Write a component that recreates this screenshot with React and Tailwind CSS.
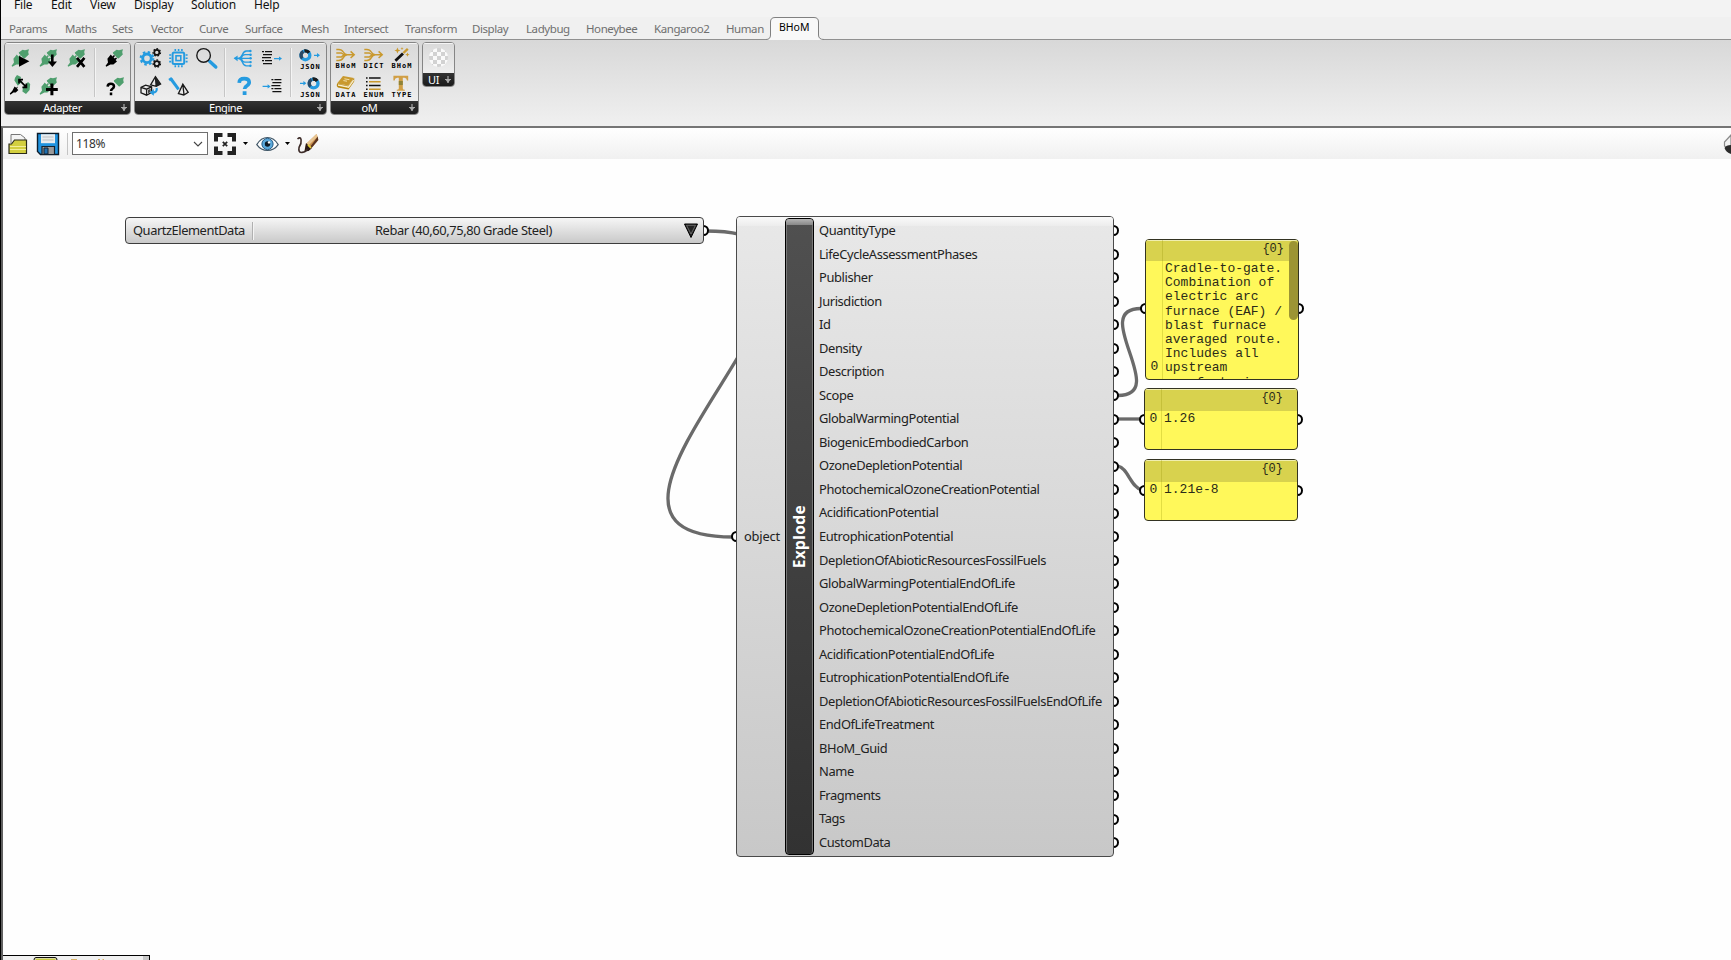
import React from "react";

const GREEN = "#4f9f6e";
const BLUE = "#259be0";
const GOLD = "#c9992e";

function Cell({ children }) {
  return (
    <svg className="block h-7 w-7 shrink-0" viewBox="0 0 28 28" fill="none">
      {children}
    </svg>
  );
}

function Tiny({ x = 3.4, y = 24.3, w = 20, children }) {
  return (
    <text x={x} y={y} textLength={w} fontSize="7" fontWeight="700" fontFamily="DejaVu Sans Mono, monospace" fill="#000">
      {children}
    </text>
  );
}

const UPPER = "M23 5.2 L22.2 8 L22.8 10.5 L18.6 14.6 L17.6 14.2 L13 9.6 L12.8 8.4 L16.6 5.8 L19 6.2 Z";
const LOWER = "M10.8 10.6 L12.4 12.4 L14 11 L15 12 L13.6 13.6 L14.6 14.6 L16.2 13.4 L17 14.4 L15.6 16 L17 17.4 L13.4 20.6 L10.4 20.4 L6.2 22.8 L5.6 21.8 L8 18.6 L7.4 14.8 Z";

function Plug({ upper = GREEN, lower = GREEN }) {
  return (
    <g>
      <path d={UPPER} fill={upper} />
      <path d={LOWER} fill={lower} />
    </g>
  );
}

function Gear({ x, y, r, c, teeth }) {
  const step = (2 * Math.PI * r) / teeth;
  return (
    <g stroke={c}>
      <circle cx={x} cy={y} r={r * 0.68} strokeWidth={r * 0.46} />
      <circle cx={x} cy={y} r={r} strokeWidth={r * 0.34} strokeDasharray={`${step * 0.5} ${step * 0.5}`} />
    </g>
  );
}

function Lines({ x, w = 11 }) {
  return (
    <g stroke="#111" strokeWidth="1.2">
      {[7.6, 10.6, 13.6, 16.6, 19.6].map((y, i) => (
        <path key={y} d={i === 0 || i === 3 ? `M${x} ${y}h2m1 0h${w - 4}` : `M${x + (i === 2 ? 0 : 1)} ${y}h${w - 2}`} />
      ))}
    </g>
  );
}

function Arrow({ x, y, w = 7 }) {
  return (
    <g>
      <path d={`M${x} ${y}h${w - 2}`} stroke={BLUE} strokeWidth="1.2" />
      <path d={`M${x + w - 3} ${y - 2.2}l3 2.2l-3 2.2z`} fill={BLUE} />
    </g>
  );
}

function Ring({ x, y }) {
  return (
    <g strokeWidth="3.4">
      <circle cx={x} cy={y} r="4.4" stroke={BLUE} />
      <path d={`M${x - 3.1} ${y + 3.1}A4.4 4.4 0 0 1 ${x - 2} ${y - 3.9}`} stroke="#2b4a66" />
      <path d={`M${x - 1} ${y - 4.3}A4.4 4.4 0 0 1 ${x + 3.6} ${y - 2.5}`} stroke="#1c1c1c" />
    </g>
  );
}

function Fan() {
  return (
    <g stroke={GOLD} strokeWidth="1.5">
      <path d="M4.3 5.4h2.5q3 0 4.5 2.6t4 2.7M4.3 9h5q2 1.7 5 1.7M4.3 12.9h5q2-2.2 5-2.2M4.3 16.4h2.5q3 0 4.5-2.8t4-2.9h6M18.6 7.4l3.6 3.3l-3.6 3.3" />
    </g>
  );
}

const ADAPTER = [
  [
    <Cell key="a"><Plug /><path d="M13 12l10.4 5.3L13 22.8z" fill="#000" /></Cell>,
    <Cell key="b"><Plug /><path d="M18.3 10.5v8" stroke="#000" strokeWidth="2.6" /><path d="M13.8 17.4h9.2l-4.6 5.6z" fill="#000" /></Cell>,
    <Cell key="c"><Plug /><path d="M15 13.8l7.4 9M22.4 13.8l-7.4 9" stroke="#000" strokeWidth="2.7" /></Cell>,
  ],
  [
    <Cell key="d">
      <path d="M11 3l4 2-.6 2.6 1.8 2-4.4 4.2-3.4-5.4.6-2.6zM17 15l5-5 2.2 2-.6 6-3.6 4-3.6-2.6z" fill={GREEN} />
      <path d="M13.6 8.4l6 6M13 11.6V7.6h4M20.4 11.6v3.8h-4" stroke="#000" strokeWidth="1.7" />
      <path d="M8.6 14.4l1.6 1.4 1.8-1.2-1 2.2 1.4 1.2-2.6 2.6-2.4-.2-3 2.4-.6-1.2 2.4-2.6z" fill="#000" />
    </Cell>,
    <Cell key="e"><Plug /><path d="M17.9 11.6v11.6M12 17.4h11.8" stroke="#000" strokeWidth="3" /></Cell>,
    <Cell key="f" />,
  ],
];

const ADAPTER_RIGHT = [
  [<Cell key="a"><Plug lower="#000" /></Cell>],
  [
    <Cell key="b">
      <path d={UPPER} fill={GREEN} transform="translate(1 0)" />
      <path d="M7.600 14.600q.2-2.800 3.200-2.800t3.200 2.500q0 1.500-1.600 2.500-1.400.8-1.400 2.200M11 20.600v2.600" stroke="#000" strokeWidth="2.500" />
    </Cell>,
  ],
];

const ENGINE_A = [
  [
    <Cell key="a">
      <Gear x={11} y={14.3} r={6.3} c={BLUE} teeth={8} />
      <Gear x={20.8} y={8.4} r={3.7} c="#111" teeth={7} />
      <Gear x={20.8} y={19.6} r={3.7} c="#111" teeth={7} />
    </Cell>,
    <Cell key="b">
      <rect x="8.600" y="8.400" width="11.600" height="11.600" rx="1.500" stroke={BLUE} strokeWidth="2" />
      <rect x="12" y="11.800" width="4.800" height="4.800" stroke={BLUE} strokeWidth="1.600" />
      <path d="M10.500 6h8.400M10.500 22.300h8.400M6.200 10.200v8.200M22.600 10.200v8.200" stroke={BLUE} strokeWidth="2" strokeDasharray="1.6 1.7" />
    </Cell>,
    <Cell key="c">
      <path d="M16.200 16.400l2.400 2.200" stroke="#222" strokeWidth="1.400" />
      <path d="M17.800 17.400l6 5.600" stroke={BLUE} strokeWidth="3.400" strokeLinecap="round" />
      <circle cx="11.600" cy="11.400" r="6.800" stroke="#1a1a1a" strokeWidth="1.400" />
    </Cell>,
  ],
  [
    <Cell key="d">
      <path d="M5 15.400l4.600-2.200 6 1.600v5.600l-5 2.800-5.600-2.400zM5 15.400l5.600 1.800 5-2.400M10.600 17.200v6" stroke="#1a1a1a" strokeWidth="1.300" />
      <path d="M12 18l2.600-1.300v3.300l-2.600 1.300z" fill="#444" />
      <path d="M19.400 4.600l5.200 7.400-4.400 2.400-5.600-1.600zM19.400 4.600l.8 9.800" stroke="#1a1a1a" strokeWidth="1.300" />
      <path d="M19.400 4.600l5.200 7.400-4.400 2.400z" fill="#222" />
      <path d="M20.600 16q1 4.400-4 4.600" stroke={BLUE} strokeWidth="2.200" />
      <path d="M17.800 17v6.800l-4.200-3.200z" fill={BLUE} />
    </Cell>,
    <Cell key="e">
      <path d="M7 7l7.600 10.400" stroke={BLUE} strokeWidth="3" />
      <path d="M5.800 6l1.600 2.200" stroke={BLUE} strokeWidth="3.600" />
      <path d="M18.800 12.200l-4.400 9.400 5.400 1.400 4.400-2.600zM18.800 12.200l1.200 10.400" stroke="#1a1a1a" strokeWidth="1.300" />
    </Cell>,
    <Cell key="f" />,
  ],
];

const ENGINE_B = [
  [
    <Cell key="a">
      <path d="M4.500 14.300h16M8 14.300q3-.3 4.400-3.700t4-3.600h4M8 14.300q3 .3 4.400 3.900t4 3.600h4M11 14.300q1.600-3.600 4-3.600h5.600M11 14.300q1.600 3.800 4 3.800h5.600" stroke={BLUE} strokeWidth="1.300" />
      <path d="M7.600 11.400v5.800l-4-2.900z" fill={BLUE} />
      <g fill={BLUE}><circle cx="20.400" cy="7" r="1.200" /><circle cx="20.600" cy="10.700" r="1.200" /><circle cx="20.600" cy="14.300" r="1.200" /><circle cx="20.600" cy="18.100" r="1.200" /><circle cx="20.400" cy="21.800" r="1.200" /></g>
    </Cell>,
    <Cell key="b"><Lines x={4} /><Arrow x={16} y={14.6} w={8} /></Cell>,
  ],
  [
    <Cell key="c">
      <path d="M9.200 10.800q.2-4.200 5-4.200t5 3.700q0 2-2.400 3.500-2.200 1.300-2.200 3.200" stroke={BLUE} strokeWidth="3.700" />
      <path d="M12.700 19.200h3.800v3.800h-3.800z" fill={BLUE} />
    </Cell>,
    <Cell key="d"><Lines x={13.4} /><Arrow x={4.6} y={14.4} w={8} /></Cell>,
  ],
];

const ENGINE_C = [
  [<Cell key="a"><Ring x={9.4} y={11.3} /><Arrow x={18} y={11.3} w={6} /><Tiny x={4.2} y={25} w={19.4}>JSON</Tiny></Cell>],
  [<Cell key="b"><Ring x={17.6} y={11.5} /><Arrow x={4} y={11.3} w={6.4} /><Tiny x={4.2} y={25} w={19.4}>JSON</Tiny></Cell>],
];

const OM = [
  [
    <Cell key="a"><Fan /><Tiny>BHoM</Tiny></Cell>,
    <Cell key="b"><Fan /><Tiny>DICT</Tiny></Cell>,
    <Cell key="c">
      <path d="M7.400 16.800l7.600-7.400" stroke="#111" strokeWidth="2.800" />
      <path d="M15.400 9l4.400-4.200" stroke={GOLD} strokeWidth="2.400" />
      <path d="M9.400 3.600l1 2.200 2.200.6-2.200.8-1 2.200-.9-2.200-2.100-.8 2.100-.6zM19.400 8.600l.7 1.500 1.500.6-1.500.5-.7 1.600-.6-1.600-1.500-.5 1.500-.6zM14 3l.5 1.200 1.200.4-1.200.4-.5 1.200-.5-1.200-1.200-.4 1.200-.4z" fill={GOLD} />
      <Tiny>BHoM</Tiny>
    </Cell>,
  ],
  [
    <Cell key="d">
      <path d="M11 4l11 2-5.600 7.600L5 11.400z" fill={GOLD} />
      <path d="M5 11.400q-1 2.800 1 4.200l10.600 2 5.600-8V6l-5.800 7.800z" fill="#b8860b" />
      <path d="M6 13l10.600 2.200 5-7" stroke="#f7ecc9" strokeWidth="1.400" />
      <path d="M12.400 6.800l5 .9M11.400 8.600l3.600.6" stroke="#f1dfa8" strokeWidth="1" />
      <Tiny y={24.8}>DATA</Tiny>
    </Cell>,
    <Cell key="e">
      <path d="M6 6h1.600M6 9.800h1.600M6 13.600h1.600M6 17.200h1.600M9 6h11.600M9 13.600h11.600" stroke="#111" strokeWidth="1.500" />
      <path d="M9 9.800h11.600M9 17.200h11.600" stroke={GOLD} strokeWidth="1.500" />
      <Tiny y={24.8}>ENUM</Tiny>
    </Cell>,
    <Cell key="f">
      <path d="M5.400 3.800h14.800v4.600h-1.200q-.3-2.600-2.600-2.600h-1.600v10.600q0 1.200 2 1.300v1H8.800v-1q2-.1 2-1.300V5.800H9.200q-2.300 0-2.600 2.600H5.400z" fill="#d19f45" />
      <path d="M10.800 9h4v4h-4z" fill="#8f8337" />
      <Tiny y={24.8}>TYPE</Tiny>
    </Cell>,
  ],
];

function Block({ rows }) {
  return (
    <div className="flex flex-col">
      {rows.map((r, i) => (
        <div key={i} className="flex">{r}</div>
      ))}
    </div>
  );
}

function Sep() {
  return (
    <div className="flex w-2.5 justify-center py-1">
      <div className="w-0.5 border-l border-r border-l-[#c6c6c6] border-r-[#f4f4f4]" />
    </div>
  );
}

function Group({ label, className, bodyClass, children }) {
  return (
    <div className={"flex shrink-0 flex-col overflow-hidden rounded-[4px] border border-[#858585] " + className}>
      <div className={"flex bg-linear-to-b from-[#d9d9d9] to-[#eeeeee] pt-px shadow-[inset_0_1px_0_#f5f5f5] " + bodyClass}>{children}</div>
      <div className="flex flex-1 items-center bg-linear-to-b from-[#333333] to-[#1c1c1c] pr-0.5 text-[11px] leading-none text-white">
        <span className="flex-1 text-center -tracking-[0.4px]">{label}</span>
        <svg className="block h-[9px] w-2" viewBox="0 0 8 9" fill="none">
          <path d="M4 1v7M1 4.500h6" stroke="#aaaaaa" strokeWidth="1.200" />
          <path d="M1.800 5h4.400L4 8z" fill="#aaaaaa" />
        </svg>
      </div>
    </div>
  );
}

const MENU = [
  ["File", "w-[37px]"],
  ["Edit", "w-[39px]"],
  ["View", "w-[44px]"],
  ["Display", "w-[57px]"],
  ["Solution", "w-[63px]"],
  ["Help", "w-[40px]"],
];

const TABS = [
  ["Params", "w-14"],
  ["Maths", "w-[47px]"],
  ["Sets", "w-[39px]"],
  ["Vector", "w-12"],
  ["Curve", "w-[46px]"],
  ["Surface", "w-14"],
  ["Mesh", "w-[43px]"],
  ["Intersect", "w-[61px]"],
  ["Transform", "w-[67px]"],
  ["Display", "w-[54px]"],
  ["Ladybug", "w-[60px]"],
  ["Honeybee", "w-[68px]"],
  ["Kangaroo2", "w-[72px]"],
  ["Human", "w-[43px]"],
];

const OUTPUTS = [
  "QuantityType", "LifeCycleAssessmentPhases", "Publisher", "Jurisdiction", "Id", "Density", "Description", "Scope",
  "GlobalWarmingPotential", "BiogenicEmbodiedCarbon", "OzoneDepletionPotential", "PhotochemicalOzoneCreationPotential",
  "AcidificationPotential", "EutrophicationPotential", "DepletionOfAbioticResourcesFossilFuels",
  "GlobalWarmingPotentialEndOfLife", "OzoneDepletionPotentialEndOfLife", "PhotochemicalOzoneCreationPotentialEndOfLife",
  "AcidificationPotentialEndOfLife", "EutrophicationPotentialEndOfLife", "DepletionOfAbioticResourcesFossilFuelsEndOfLife",
  "EndOfLifeTreatment", "BHoM_Guid", "Name", "Fragments", "Tags", "CustomData",
];

function Grip({ className }) {
  return <span className={"absolute block h-[11px] w-[11px] rounded-full border-2 border-black bg-white " + className} />;
}

function Panel({ className, headClass, index, indexClass, grip, children }) {
  return (
    <div className={"absolute " + className}>
      <Grip className={"-left-[5px] " + grip} />
      <Grip className={"-right-[5px] " + grip} />
      <div className="relative flex h-full flex-col overflow-hidden rounded-[4px] border border-[#333322] bg-[#fff85a] font-['Liberation_Mono',monospace] text-[13px] leading-[14.2px] text-[#2b2b18]">
        <div className={"flex shrink-0 items-start justify-end border-t border-[#f0eeb0] bg-[#d8d24e] pr-[14px] text-[12px] " + headClass}>
          <span className="pt-px">{"{0}"}</span>
        </div>
        <div className="flex min-h-0 flex-1">
          <div className={"flex w-4 shrink-0 justify-center pl-px " + indexClass}>{index}</div>
          {children}
        </div>
        <div className="absolute inset-y-0 left-4 w-px bg-[#8a8a00]/25" />
      </div>
    </div>
  );
}

function Toolbar() {
  return (
    <div className="flex h-[31px] shrink-0 items-center bg-linear-to-b from-white to-[#f0f0f0] pl-[5px]">
      <svg className="block h-6 w-5" viewBox="0 0 20 24" fill="none">
        <path d="M3 11V2.500h9.500L17 6v5" fill="#f4f4f4" stroke="#777" strokeWidth="1" />
        <path d="M1 21.500V12h2.500l3-4H18.500v13.500z" fill="#d3cf3f" stroke="#2b2b1a" strokeWidth="1.200" />
        <path d="M2 14.500h16M2 17.500h16" stroke="#f3ef9a" strokeWidth="1" />
      </svg>
      <svg className="ml-2 block h-6 w-6" viewBox="0 0 24 24" fill="none">
        <path d="M1.500 1.500h21v21H4.500l-3-3z" fill="#1f92de" stroke="#0d1c2b" strokeWidth="1.400" />
        <path d="M5 2.200h14v9H5z" fill="#e8ecef" />
        <path d="M6.500 5h11M6.500 8h11" stroke="#b9c0c6" strokeWidth="1.200" />
        <path d="M6 14.500h12.500v8H6z" fill="#9a9a9a" stroke="#16222e" strokeWidth="1.200" />
        <path d="M8 16h4v6H8z" fill="#1f6fae" stroke="#16222e" />
      </svg>
      <div className="ml-[7px] h-5.5 w-px bg-[#c4c4c4]" />
      <div className="ml-1 flex h-[23px] w-[136px] items-center justify-between border border-[#6f6f6f] bg-white pr-1 pl-[3px] text-[12px] text-[#333]">
        <span className="-tracking-[0.4px]">118%</span>
        <svg className="block h-2 w-2.5" viewBox="0 0 10 8" fill="none"><path d="M1 2l4 4 4-4" stroke="#444" strokeWidth="1.100" /></svg>
      </div>
      <svg className="ml-[5px] block h-6 w-6" viewBox="0 0 24 24" fill="none">
        <path d="M9.500 3H3v6.500M14.500 3H21v6.500M9.500 21H3v-6.500M14.500 21H21v-6.500" stroke="#222" strokeWidth="4" />
        <path d="M9.800 9.800l4.400 4.400M14.200 9.800l-4.400 4.400" stroke="#222" strokeWidth="1.700" />
      </svg>
      <svg className="ml-1.5 block h-[3px] w-[5px]" viewBox="0 0 5 3"><path d="M0 0h5L2.500 3z" fill="#000" /></svg>
      <svg className="ml-2 block h-4 w-[23px]" viewBox="0 0 23 16" fill="none">
        <path d="M.8 8.600Q5 1.500 11.500 1.500T22.200 8.600Q18 14.500 11.500 14.500T.8 8.600z" fill="#fff" stroke="#3f5566" strokeWidth="1.200" />
        <circle cx="11.500" cy="8" r="5.600" fill="#5ba9dc" stroke="#245b86" />
        <circle cx="11.500" cy="8" r="2.700" fill="#0d1a26" />
        <circle cx="13" cy="6.400" r="1.200" fill="#fff" />
      </svg>
      <svg className="ml-1.5 block h-[3px] w-[5px]" viewBox="0 0 5 3"><path d="M0 0h5L2.500 3z" fill="#000" /></svg>
      <svg className="ml-1.5 block h-6 w-6" viewBox="0 0 24 24" fill="none">
        <path d="M20.500 2l1.800 6-7.600 9-6 2.400L10 12z" fill="#c98f4e" />
        <path d="M20.500 2L10 12l1.600 2.200L21.800 4.500z" fill="#e8c592" />
        <path d="M10 11l5.600 5.600-3 2.400-4.200.6z" fill="#2a1a18" />
        <path d="M21.800 4.500l.5 3.500-7.600 9-1.200-1.200z" fill="#5a3420" />
        <path d="M12 12.800l3 3" stroke="#e3cf3a" strokeWidth="1.800" />
        <path d="M1.500 7q3-2.600 3.600.8t-2 7.400q-1.200 5.600 3 5.200t5-3.400" stroke="#3c2b28" strokeWidth="1.600" />
      </svg>
      <div className="flex-1" />
      <svg className="block h-6 w-2" viewBox="0 0 8 24" fill="none">
        <path d="M8 3L1.500 10v4l6.500 6z" fill="#f2f2f2" stroke="#8a8a8a" strokeWidth="1.200" />
        <path d="M8 13q-5 0-6.500 3 1.500 4.500 6.500 6z" fill="#2b2b2b" />
      </svg>
    </div>
  );
}

export default function App() {
  return (
    <div className="flex h-[960px] w-[1731px] overflow-hidden bg-[#f3f3f3] font-['Noto_Sans','Open_Sans',sans-serif]">
      <div className="w-px shrink-0 bg-black" />
      <div className="flex min-w-0 flex-1 flex-col">
        <div className="flex h-[17px] shrink-0 items-start bg-[#f3f3f3] pl-[13px] text-[12px] leading-[9px] text-[#111]">
          {MENU.map(([t, w]) => (
            <span key={t} className={"shrink-0 -tracking-[0.2px] " + w}>{t}</span>
          ))}
        </div>

        <div className="flex h-[23px] shrink-0 items-stretch bg-[#f0f0f0] text-[11.5px] leading-[23px] text-[#6f6f6f]">
          <div className="flex w-[765px] shrink-0 border-b border-[#909090] pl-2">
            {TABS.map(([t, w]) => (
              <span key={t} className={"shrink-0 -tracking-[0.42px] " + w}>{t}</span>
            ))}
          </div>
          <svg className="block h-[23px] w-[58px] shrink-0" viewBox="0 0 58 23" fill="none">
            <path d="M0 22.500q4.500 0 4.500-4.500V5q0-4.500 4.500-4.500h39q4.500 0 4.500 4.500v13q0 4.500 5.500 4.500V23H0z" fill="#f8f8f8" />
            <path d="M0 22.500q4.500 0 4.500-4.500V5q0-4.500 4.500-4.500h39q4.500 0 4.500 4.500v13q0 4.500 5.500 4.500" stroke="#808080" />
            <text x="13" y="14" fontSize="11.500" textLength="30.500" lengthAdjust="spacingAndGlyphs" fill="#000" fontFamily="Noto Sans, sans-serif">BHoM</text>
          </svg>
          <div className="flex-1 border-b border-[#909090]" />
        </div>

        <div className="flex h-[86px] shrink-0 items-start gap-[3px] bg-linear-to-b from-[#d8d8d8] to-[#f0f0f0] pt-0.5 pl-[3px]">
          <Group label="Adapter" className="h-[73px] w-[127px]" bodyClass="h-[58px] pl-px">
            <Block rows={ADAPTER} />
            <Sep />
            <Block rows={ADAPTER_RIGHT} />
          </Group>
          <Group label="Engine" className="h-[73px] w-[193px]" bodyClass="h-[58px] pl-px">
            <Block rows={ENGINE_A} />
            <Sep />
            <Block rows={ENGINE_B} />
            <Sep />
            <Block rows={ENGINE_C} />
          </Group>
          <Group label="oM" className="h-[73px] w-[89px]" bodyClass="h-[58px] pl-px">
            <Block rows={OM} />
          </Group>
          <Group label="UI" className="h-[45px] w-[33px]" bodyClass="h-[30px] pl-0.5">
            <Cell>
              <defs>
                <pattern id="checks" width="8" height="8" patternUnits="userSpaceOnUse">
                  <rect width="8" height="8" fill="#fafafa" />
                  <path d="M0 0h4v4H0zM4 4h4v4H4z" fill="#d2d2d2" />
                </pattern>
              </defs>
              <circle cx="13.500" cy="13.500" r="9.500" fill="url(#checks)" />
            </Cell>
          </Group>
        </div>

        <div className="flex min-h-0 flex-1 flex-col border-t-2 border-l-2 border-t-[#757575] border-l-[#606060] bg-[#fefefe]">
          <Toolbar />

          <div className="relative -mt-[159px] -ml-[3px] flex-1">
            <svg className="absolute top-0 left-0 h-[960px] w-[1731px]" viewBox="0 0 1731 960" fill="none" stroke="#6a6a6a" strokeWidth="3.300">
              <path d="M706 231C927 231 517 537 733 537" />
              <path d="M1118 395.500C1171 395.500 1088 308.500 1141 308.500" />
              <path d="M1118 419H1142" />
              <path d="M1118 466C1128 468 1131 488 1142 490" />
            </svg>

            <div className="absolute top-[217px] left-[125px] h-[27px] w-[579px]">
              <Grip className="top-2 -right-[5px]" />
              <div className="relative flex h-full items-center rounded-[4px] border border-[#3d3d3d] bg-linear-to-b from-[#f6f6f6] to-[#c9c9c9] pl-[7px] text-[12.9px] text-[#222]">
                <span className="w-[119px] shrink-0 -tracking-[0.45px]">QuartzElementData</span>
                <div className="h-[18px] w-0.5 border-l border-r border-l-[#b0b0b0] border-r-[#f4f4f4]" />
                <span className="flex-1 pr-[10px] text-center -tracking-[0.4px]">Rebar (40,60,75,80 Grade Steel)</span>
                <svg className="mr-1 block h-4 w-4" viewBox="0 0 16 16"><path d="M1.500 1h13L8 14.500z" fill="#222" stroke="#000" /><path d="M3.500 2.300h9L8 11z" fill="none" stroke="#777" strokeWidth="0.800" /></svg>
              </div>
            </div>

            <div className="absolute top-[216px] left-[736px] h-[641px] w-[378px]">
              <Grip className="top-[315px] -left-[5px]" />
              <div className="absolute inset-y-0 -right-[5px] flex flex-col pt-[3px] pb-[3px]">
                {OUTPUTS.map((o) => (
                  <div key={o} className="flex h-[23.54px] shrink-0 items-center">
                    <span className="block h-[11px] w-[11px] rounded-full border-2 border-black bg-white" />
                  </div>
                ))}
              </div>
              <div className="relative flex h-full overflow-hidden rounded-[4px] border border-[#4a4a4a] bg-linear-to-b from-[#e8e8e8] to-[#c8c8c8] text-[12.9px] text-[#222]">
                <div className="absolute inset-x-0 top-0 h-[9px] bg-linear-to-b from-[#fafafa] to-[#ececec]" />
                <div className="relative flex w-12 shrink-0 items-center justify-center pr-px pl-[3px] -tracking-[0.2px]">object</div>
                <div className="relative my-px flex w-[29px] shrink-0 items-center justify-center overflow-hidden rounded-[4px] border-[1.5px] border-black bg-linear-to-b from-[#505050] to-[#323232] shadow-[inset_1px_0_0_#777,inset_-1px_0_0_#777]">
                  <div className="absolute inset-x-0 top-0 h-1.5 bg-linear-to-b from-[#b5b5b5] to-[#888888]" />
                  <span className="rotate-180 text-[15.5px] font-bold tracking-[0.35px] text-white [writing-mode:vertical-rl]">Explode</span>
                </div>
                <div className="relative flex flex-col pt-0.5 pl-[5px] -tracking-[0.39px]">
                  {OUTPUTS.map((o) => (
                    <div key={o} className="flex h-[23.54px] shrink-0 items-center whitespace-nowrap">{o}</div>
                  ))}
                </div>
              </div>
            </div>

            <Panel className="top-[239px] left-[1145px] h-[141px] w-[154px]" headClass="h-[21px]" index="0" indexClass="items-end pb-[5px]" grip="top-16">
              <div className="pt-px pl-[3px] whitespace-pre">
                {"Cradle-to-gate.\nCombination of\nelectric arc\nfurnace (EAF) /\nblast furnace\naveraged route.\nIncludes all\nupstream\nmanufacturing"}
              </div>
              <div className="absolute top-px right-0 h-[79px] w-[9px] rounded-full bg-[#9c9434]" />
            </Panel>
            <Panel className="top-[388px] left-[1144px] h-[62px] w-[154px]" headClass="h-[22px]" index="0" indexClass="items-start pt-px" grip="top-[26px]">
              <div className="pt-px pl-[3px]">1.26</div>
            </Panel>
            <Panel className="top-[459px] left-[1144px] h-[62px] w-[154px]" headClass="h-[22px]" index="0" indexClass="items-start pt-px" grip="top-[26px]">
              <div className="pt-px pl-[3px]">1.21e-8</div>
            </Panel>

            <div className="absolute bottom-0 left-[3px] flex h-[5px] w-[147px] overflow-hidden border-t border-r border-black bg-[#f0f0f0]">
              <svg className="block h-1 w-[146px]" viewBox="0 0 146 4" fill="none">
                <path d="M31 4q0-2.500 2-2.500h19q2 0 2 2.500" fill="#d8d8a0" stroke="#111" />
                <path d="M33 3h19v1h-19z" fill="#c9cc3c" />
                <path d="M68 3h6v1h-6zM95 3h2v1h-2zM99.500 3h1.500v1h-1.500z" fill="#d8b368" />
                <path d="M140 0h6v4h-6z" fill="#c8c8c8" />
              </svg>
            </div>
          </div>
        </div>
      </div>
    </div>
  );
}
